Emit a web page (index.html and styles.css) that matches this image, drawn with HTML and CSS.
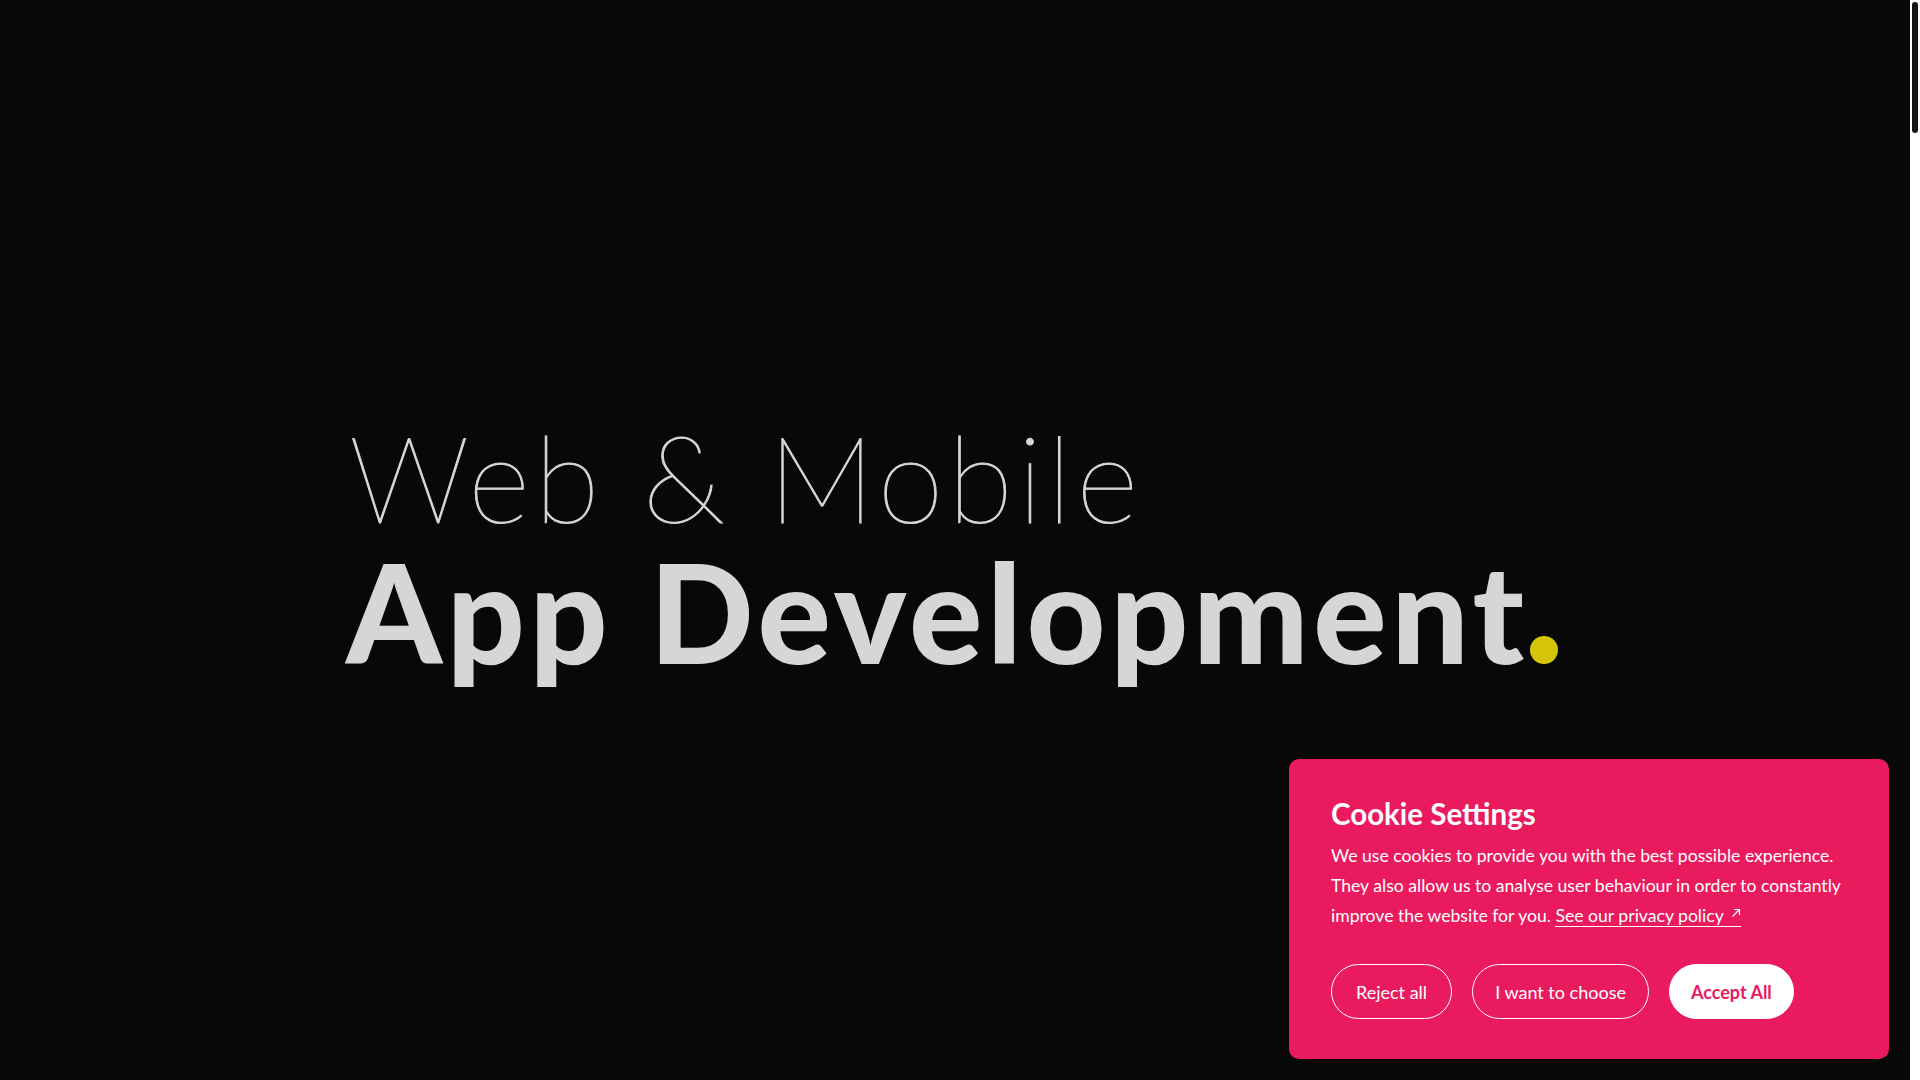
FILE: index.html
```html
<!DOCTYPE html>
<html lang="en">
<head>
<meta charset="utf-8">
<title>Web &amp; Mobile App Development</title>
<link rel="stylesheet" href="styles.css">
</head>
<body>
<div class="viewport">
  <main class="page">
    <section class="hero">
      <h1 class="hero-title">
        <span class="hero-light">Web &amp; Mobile</span>
        <span class="hero-bold">App Development<span class="hero-dot"></span></span>
      </h1>
    </section>
  </main>
  <div class="scrollbar" aria-hidden="true"><div class="scrollbar-thumb"></div></div>
</div>

<aside class="cookie" role="dialog" aria-label="Cookie Settings">
  <h2 class="cookie-title">Cookie Settings</h2>
  <p class="cookie-text">We use cookies to provide you with the best possible experience. They also allow us to analyse user behaviour in order to constantly improve the website for you. <a class="cookie-link" href="#">See our privacy policy<svg class="cookie-arrow" viewBox="0 0 10 10" width="10" height="10" aria-hidden="true"><path d="M1.5 8.5 L8.5 1.5 M3 1.5 H8.5 V7" fill="none" stroke="#fff" stroke-width="1.2"/></svg></a></p>
  <div class="cookie-actions">
    <button class="btn btn-outline btn-reject" type="button">Reject all</button>
    <button class="btn btn-outline btn-choose" type="button">I want to choose</button>
    <button class="btn btn-solid" type="button">Accept All</button>
  </div>
</aside>
</body>
</html>
```
FILE: styles.css
```css
html, body {
  margin: 0;
  padding: 0;
  background: #080808;
  overflow: hidden;
}

body {
  font-family: "Lato", "Liberation Sans", sans-serif;
  color: #d6d6d6;
}

.viewport {
  display: flex;
  height: 100vh;
}

.page {
  flex: 1;
  display: flex;
  flex-direction: column;
}

.scrollbar {
  width: 10px;
  box-sizing: border-box;
  padding: 2px;
  background: #ffffff;
}

.scrollbar-thumb {
  height: 131px;
  border-radius: 3px;
  background: #151515;
}

.hero {
  height: 1080px;
  box-sizing: border-box;
  padding: 417px 0 0 346px;
}

.hero-title {
  margin: 0;
  display: flex;
  flex-direction: column;
  font-weight: normal;
  color: #d6d6d6;
}

.hero-light {
  font-weight: 100;
  font-size: 120px;
  line-height: 1;
  padding-left: 3px;
  letter-spacing: 4.4px;
  -webkit-text-stroke: 1.1px #d6d6d6;
}

.hero-bold {
  font-weight: 900;
  font-size: 137px;
  line-height: 1;
  margin-top: 6px;
  display: flex;
  align-items: baseline;
  letter-spacing: 4.6px;
}

.hero-dot {
  width: 28px;
  height: 28px;
  border-radius: 50%;
  background: #d4c50a;
  margin-left: 1px;
}

.cookie {
  position: fixed;
  right: 31px;
  bottom: 21px;
  width: 600px;
  box-sizing: border-box;
  padding: 37px 36px 40px 42px;
  background: #e91b5e;
  border-radius: 10px;
  color: #ffffff;
}

.cookie-title {
  margin: 0;
  font-size: 29.5px;
  line-height: 1.2;
  font-weight: 700;
}

.cookie-text {
  margin: 10px 0 0;
  font-size: 17.6px;
  line-height: 30px;
}

.cookie-link {
  color: #ffffff;
  text-decoration: none;
  border-bottom: 1px solid #ffffff;
}

.cookie-arrow {
  vertical-align: 4px;
  margin-left: 7px;
}

.cookie-actions {
  display: flex;
  gap: 20px;
  margin-top: 33px;
}

.btn {
  height: 55px;
  padding: 0 23px;
  border-radius: 28px;
  font-family: "Lato", "Liberation Sans", sans-serif;
  font-size: 18px;
  cursor: pointer;
}

.btn-reject {
  padding: 0 24px;
}

.btn-choose {
  padding: 0 22px;
}

.btn-outline {
  background: transparent;
  color: #ffffff;
  border: 1px solid #ffffff;
}

.btn-solid {
  background: #ffffff;
  color: #e91b5e;
  border: 1px solid #ffffff;
  font-weight: 700;
  padding: 0 21px;
}
```
